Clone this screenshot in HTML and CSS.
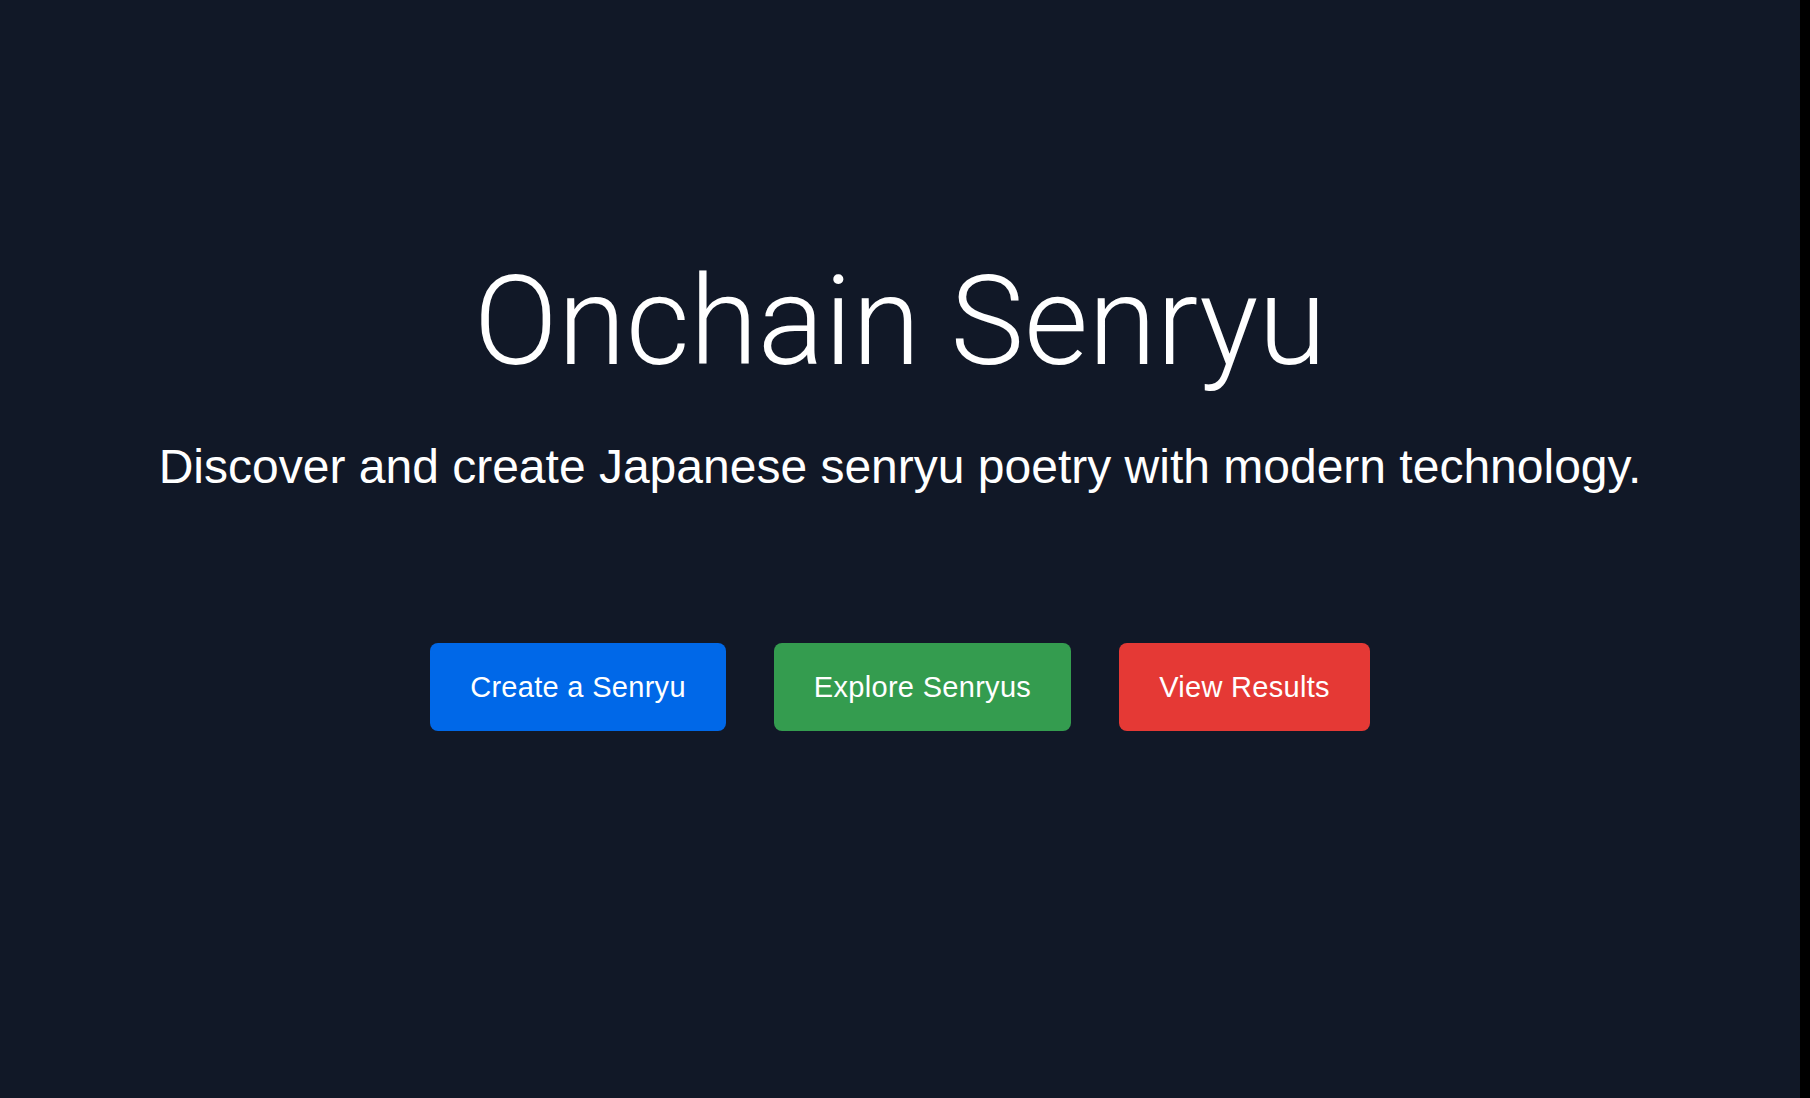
FILE: index.html
```html
<!DOCTYPE html>
<html lang="en">
<head>
<meta charset="utf-8">
<title>Onchain Senryu</title>
<link rel="stylesheet" href="styles.css">
</head>
<body>
<div class="frame">
  <main class="hero">
    <h1 class="title">Onchain Senryu</h1>
    <p class="subtitle">Discover and create Japanese senryu poetry with modern technology.</p>
    <div class="actions">
      <a class="btn btn-blue" href="#">Create a Senryu</a>
      <a class="btn btn-green" href="#">Explore Senryus</a>
      <a class="btn btn-red" href="#">View Results</a>
    </div>
  </main>
  <div class="edge"></div>
</div>
</body>
</html>
```
FILE: styles.css
```css
html, body {
  margin: 0;
  padding: 0;
  height: 100%;
}
body {
  background: #111827;
  font-family: "Liberation Sans", Arial, sans-serif;
  color: #ffffff;
}
.frame {
  display: grid;
  grid-template-columns: 1fr 10px;
  height: 100%;
}
.edge {
  background: #000000;
}
.hero {
  display: flex;
  flex-direction: column;
  align-items: center;
  padding-top: 248px;
}
.title {
  margin: 0;
  font-family: Roboto, "Liberation Sans", sans-serif;
  font-weight: 300;
  font-size: 124px;
  line-height: 1.2;
  letter-spacing: 0;
}
.subtitle {
  margin: 41px 0 0;
  font-size: 48px;
  line-height: 1.2;
}
.actions {
  display: flex;
  gap: 48px;
  margin-top: 148px;
}
.btn {
  display: block;
  padding: 0 40px;
  height: 88px;
  line-height: 88px;
  border-radius: 8px;
  color: #ffffff;
  text-decoration: none;
  font-size: 29px;
  letter-spacing: 0.3px;
}
.btn-blue { background: #0068e8; }
.btn-green { background: #349c4f; }
.btn-red { background: #e53935; }
```
